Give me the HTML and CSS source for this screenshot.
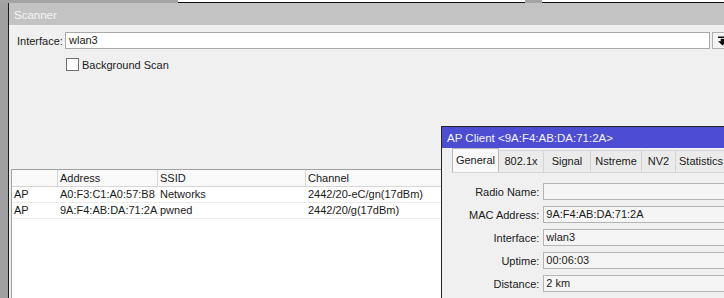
FILE: index.html
```html
<!DOCTYPE html>
<html lang="en">
<head>
    <meta charset="UTF-8">
    <title>Scanner</title>
    <link rel="stylesheet" href="styles.css">
</head>
<body>
    <div class="desktop">
        <div class="strip">
            <div class="strip-gray strip-a"></div>
            <div class="strip-white strip-b"></div>
            <div class="strip-gray strip-c"></div>
            <div class="strip-white strip-d"></div>
        </div>

        <div class="scanner">
            <div class="scanner-title">Scanner</div>
            <div class="scanner-body">
                <div class="iface-row">
                    <div class="iface-label">Interface:</div>
                    <div class="iface-input">wlan3</div>
                    <div class="iface-btn">
                        <svg width="10" height="10" viewBox="0 0 10 10">
                            <rect x="0" y="0" width="10" height="1.6" fill="#000"/>
                            <rect x="3" y="2.6" width="4" height="3" fill="#000"/>
                            <polygon points="0,5.4 10,5.4 5,10" fill="#000"/>
                        </svg>
                    </div>
                </div>

                <div class="check-row">
                    <span class="checkbox"></span>
                    <span>Background Scan</span>
                </div>

                <div class="scan-table">
                    <div class="scan-row scan-head">
                        <div class="cell"></div>
                        <div class="cell">Address</div>
                        <div class="cell">SSID</div>
                        <div class="cell">Channel</div>
                    </div>
                    <div class="scan-row">
                        <div class="cell">AP</div>
                        <div class="cell">A0:F3:C1:A0:57:B8</div>
                        <div class="cell">Networks</div>
                        <div class="cell">2442/20-eC/gn(17dBm)</div>
                    </div>
                    <div class="scan-row">
                        <div class="cell">AP</div>
                        <div class="cell">9A:F4:AB:DA:71:2A</div>
                        <div class="cell">pwned</div>
                        <div class="cell">2442/20/g(17dBm)</div>
                    </div>
                </div>
            </div>
        </div>

        <div class="apclient">
            <div class="apclient-title">AP Client &lt;9A:F4:AB:DA:71:2A&gt;</div>
            <div class="tabs">
                <div class="tab active">General</div>
                <div class="tab">802.1x</div>
                <div class="tab">Signal</div>
                <div class="tab">Nstreme</div>
                <div class="tab">NV2</div>
                <div class="tab">Statistics</div>
            </div>
            <div class="tab-panel">
                <div class="form-row">
                    <div class="form-label">Radio Name:</div>
                    <div class="form-field"></div>
                </div>
                <div class="form-row">
                    <div class="form-label">MAC Address:</div>
                    <div class="form-field">9A:F4:AB:DA:71:2A</div>
                </div>
                <div class="form-row">
                    <div class="form-label">Interface:</div>
                    <div class="form-field">wlan3</div>
                </div>
                <div class="form-row">
                    <div class="form-label">Uptime:</div>
                    <div class="form-field">00:06:03</div>
                </div>
                <div class="form-row">
                    <div class="form-label">Distance:</div>
                    <div class="form-field">2 km</div>
                </div>
            </div>
        </div>
    </div>
</body>
</html>
```

FILE: styles.css
```css
body, html {
    margin: 0;
    padding: 0;
    overflow: hidden;
    background: #a0a0a0;
    font-family: 'Liberation Sans', Arial, sans-serif;
    font-size: 11px;
    color: #1a1a1a;
}

.desktop {
    position: relative;
    width: 724px;
    height: 298px;
    overflow: hidden;
}

.strip {
    display: flex;
    height: 3px;
}

.strip-gray {
    background: #a4a4a4;
}

.strip-white {
    background: #ffffff;
    box-sizing: border-box;
    border-bottom: 1px solid #111;
}

.strip-a { width: 178px; }
.strip-b { width: 347px; }
.strip-c { width: 17px; }
.strip-d { flex: 1; }

.scanner {
    margin-left: 8px;
    width: 740px;
    height: 295px;
    border-left: 1px solid #1c1c1c;
    background: #f0f0f0;
    display: flex;
    flex-direction: column;
}

.scanner-title {
    height: 22px;
    line-height: 24px;
    padding-left: 5px;
    background: #c3c3c3;
    color: #f6f6f6;
    font-size: 11.5px;
}

.scanner-body {
    flex: 1;
    display: flex;
    flex-direction: column;
    padding-top: 7px;
}

.iface-row {
    display: flex;
    align-items: center;
    padding-left: 8px;
}

.iface-label {
    width: 48px;
}

.iface-input {
    box-sizing: border-box;
    width: 645px;
    height: 17px;
    line-height: 15px;
    padding-left: 3px;
    background: #ffffff;
    border: 1px solid #a8a8a8;
}

.iface-btn {
    box-sizing: border-box;
    margin-left: 2px;
    width: 16px;
    height: 17px;
    border: 1px solid #b0b0b0;
    background: #f4f4f4;
    display: flex;
    align-items: center;
    padding-left: 5px;
}

.check-row {
    display: flex;
    align-items: center;
    margin-top: 9px;
    margin-left: 57px;
    height: 13px;
    line-height: 12px;
}

.checkbox {
    box-sizing: border-box;
    width: 13px;
    height: 13px;
    border: 1px solid #707070;
    background: #ffffff;
    margin-right: 3px;
}

.scan-table {
    flex: 1;
    margin-top: 98px;
    margin-left: 2px;
    background: #ffffff;
    border-left: 1px solid #a0a0a0;
    border-top: 1px solid #a0a0a0;
}

.scan-row {
    display: grid;
    grid-template-columns: 46px 100px 148px 1fr;
    height: 16px;
    box-sizing: border-box;
    border-bottom: 1px solid #ececec;
}

.scan-row .cell {
    padding-left: 2px;
    line-height: 15px;
    white-space: nowrap;
}

.scan-head {
    height: 17px;
    background: #f9f9f9;
    border-bottom: 1px solid #d6d6d6;
}

.scan-head .cell {
    border-right: 1px solid #d6d6d6;
    line-height: 16px;
}

.apclient {
    position: absolute;
    left: 441px;
    top: 126px;
    width: 300px;
    bottom: -2px;
    border: 1px solid #262626;
    background: #f0f0f0;
}

.apclient-title {
    height: 21px;
    line-height: 23px;
    padding-left: 5px;
    background: #4d4dd4;
    color: #f2f2ff;
    font-size: 11.5px;
}

.tabs {
    display: flex;
    align-items: flex-end;
    height: 24px;
    margin-left: 10px;
    border-bottom: 1px solid #d4d4d4;
}

.tab {
    box-sizing: border-box;
    height: 22px;
    line-height: 21px;
    text-align: center;
    background: #ebebeb;
    border: 1px solid #d4d4d4;
    border-bottom: none;
    margin-right: -1px;
    white-space: nowrap;
}

.tab:nth-child(1) { width: 47px; }
.tab:nth-child(2) { width: 46px; }
.tab:nth-child(3) { width: 48px; }
.tab:nth-child(4) { width: 52px; }
.tab:nth-child(5) { width: 35px; }
.tab:nth-child(6) {
    width: 60px;
    text-align: left;
    padding-left: 3px;
}

.tab.active {
    height: 24px;
    line-height: 23px;
    background: #f9f9f9;
    border-color: #b8b8b8;
    position: relative;
    z-index: 1;
}

.tab-panel {
    padding-top: 10px;
    display: flex;
    flex-direction: column;
    gap: 6px;
}

.form-row {
    display: flex;
    align-items: center;
}

.form-label {
    width: 98px;
    text-align: right;
    margin-right: 4px;
}

.form-field {
    box-sizing: border-box;
    width: 200px;
    height: 17px;
    line-height: 15px;
    padding-left: 2px;
    background: #f5f5f5;
    border: 1px solid #b4b4b4;
}
```
